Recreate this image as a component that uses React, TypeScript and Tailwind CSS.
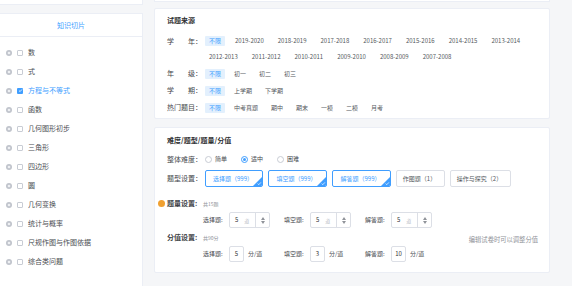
import React from "react";

const years1 = ["2019-2020", "2018-2019", "2017-2018", "2016-2017", "2015-2016", "2014-2015", "2013-2014"];
const years2 = ["2012-2013", "2011-2012", "2010-2011", "2009-2010", "2008-2009", "2007-2008"];

const topics = [
  { name: "数" },
  { name: "式" },
  { name: "方程与不等式", checked: true },
  { name: "函数" },
  { name: "几何图形初步" },
  { name: "三角形" },
  { name: "四边形" },
  { name: "圆" },
  { name: "几何变换" },
  { name: "统计与概率" },
  { name: "尺规作图与作图依据" },
  { name: "综合类问题" },
];

const Tag = ({ text, active }: { text: string; active?: boolean }) => (
  <span
    className={
      active
        ? "h-[10px] px-[4px] flex items-center rounded-[1px] bg-[#e3f0fd] text-[#409eff] text-[6px]"
        : "h-[10px] px-[4px] flex items-center text-[#555a60] text-[6px]"
    }
  >
    {text}
  </span>
);

const Label = ({ children, w = "w-[38px]" }: { children: React.ReactNode; w?: string }) => (
  <span className={`${w} shrink-0 text-[7px] text-[#45484d] whitespace-pre`}>{children}</span>
);

const OptionRow = ({ label, items, gap = "gap-[5px]" }: { label: string; items: string[]; gap?: string }) => (
  <div className="h-[17px] flex items-center">
    <Label>{label}</Label>
    <div className={`flex items-center ${gap}`}>
      <Tag text="不限" active />
      {items.map((t) => (
        <Tag key={t} text={t} />
      ))}
    </div>
  </div>
);

const Radio = ({ text, checked }: { text: string; checked?: boolean }) => (
  <div className="flex items-center gap-[3px]">
    <span
      className={
        checked
          ? "w-[7px] h-[7px] rounded-full border border-[#409eff] flex items-center justify-center bg-white"
          : "w-[7px] h-[7px] rounded-full border border-[#c8ccd4] bg-white"
      }
    >
      {checked && <span className="w-[3px] h-[3px] rounded-full bg-[#409eff]" />}
    </span>
    <span className="text-[6px] text-[#45484d]">{text}</span>
  </div>
);

const TypeButton = ({ text, w, active }: { text: string; w: string; active?: boolean }) => (
  <div
    className={
      active
        ? `relative ${w} h-[17px] rounded-[2px] border border-[#409eff] bg-white flex items-center justify-center text-[6px] text-[#409eff] overflow-hidden`
        : `relative ${w} h-[17px] rounded-[2px] border border-[#dcdfe6] bg-white flex items-center justify-center text-[6px] text-[#555a60]`
    }
  >
    <span className="pr-[2px]">{text}</span>
    {active && (
      <svg className="absolute right-0 bottom-0" width="9" height="9" viewBox="0 0 9 9">
        <path d="M9 0 L9 9 L0 9 Z" fill="#409eff" />
        <path d="M4.6 6.6 L5.8 7.7 L7.9 5.4" stroke="#fff" strokeWidth="0.7" fill="none" />
      </svg>
    )}
  </div>
);

const Stepper = ({ value }: { value: string }) => (
  <div className="w-[41px] h-[16px] flex items-center rounded-[2px] border border-[#dcdfe6] bg-white">
    <span className="pl-[5px] text-[6px] text-[#303133]">{value}</span>
    <span className="ml-[6px] text-[5px] text-[#b4b8bf]">道</span>
    <div className="ml-auto h-full w-[14px] border-l border-[#dcdfe6] flex flex-col items-center justify-center gap-[1px]">
      <svg width="4" height="3" viewBox="0 0 4 3">
        <path d="M0 3 L2 0 L4 3 Z" fill="#909399" />
      </svg>
      <svg width="4" height="3" viewBox="0 0 4 3">
        <path d="M0 0 L2 3 L4 0 Z" fill="#909399" />
      </svg>
    </div>
  </div>
);

const ScoreInput = ({ value }: { value: string }) => (
  <div className="flex items-center gap-[4px]">
    <div className="w-[15px] h-[16px] rounded-[2px] border border-[#dcdfe6] bg-white flex items-center justify-center text-[6px] text-[#303133]">
      {value}
    </div>
    <span className="text-[6px] text-[#45484d]">分/道</span>
  </div>
);

const Field = ({ label, children }: { label: string; children: React.ReactNode }) => (
  <div className="w-[81px] flex items-center gap-[6px]">
    <span className="w-[20px] text-[6px] text-[#45484d] whitespace-nowrap">{label}</span>
    {children}
  </div>
);

export default function App() {
  return (
    <div className="w-[572px] h-[286px] overflow-hidden bg-[#f5f6f8] flex font-['Noto_Sans_CJK_SC','Noto_Sans',sans-serif] leading-none">
      {/* sidebar */}
      <div className="w-[143px] shrink-0 flex flex-col">
        <div className="h-[5px] bg-white border-b border-r border-[#ebeef5]" />
        <div className="mt-[8px] flex-1 bg-white border-t border-r border-[#ebeef5]">
          <div className="h-[23px] flex items-center justify-center border-b border-[#ebeef5] text-[7px] text-[#409eff]">
            知识切片
          </div>
          <div className="pt-[6px]">
            {topics.map((t) => (
              <div key={t.name} className="h-[19px] flex items-center pl-[6px]">
                <svg width="6" height="6" viewBox="0 0 6 6">
                  <circle cx="3" cy="3" r="3" fill="#c0c4cc" />
                  <circle cx="3" cy="3" r="1.3" fill="#eef0f3" />
                </svg>
                {t.checked ? (
                  <span className="ml-[5px] w-[6px] h-[6px] rounded-[1px] bg-[#409eff] flex items-center justify-center">
                    <svg width="5" height="5" viewBox="0 0 5 5">
                      <path d="M1 2.6 L2.1 3.6 L4 1.4" stroke="#fff" strokeWidth="0.8" fill="none" />
                    </svg>
                  </span>
                ) : (
                  <span className="ml-[5px] w-[6px] h-[6px] rounded-[1px] border border-[#c8ccd4] bg-white" />
                )}
                <span className={t.checked ? "ml-[5px] text-[7px] text-[#409eff]" : "ml-[5px] text-[7px] text-[#4a4d52]"}>
                  {t.name}
                </span>
              </div>
            ))}
          </div>
        </div>
      </div>

      {/* main */}
      <div className="ml-[11px] w-[396px] shrink-0 flex flex-col">
        <div className="h-[2px] bg-white border-b border-x border-[#ebeef5]" />

        {/* source */}
        <div className="mt-[6px] h-[111px] bg-white border border-[#ebeef5] rounded-[2px] pt-[6px] pl-[12px]">
          <div className="h-[10px] flex items-center text-[7px] font-bold text-[#303133]">试题来源</div>
          <div className="mt-[8px]">
            <div className="h-[16px] flex items-center">
              <Label>{"学　　年："}</Label>
              <div className="flex items-center gap-[6px]">
                <Tag text="不限" active />
                {years1.map((y) => (
                  <Tag key={y} text={y} />
                ))}
              </div>
            </div>
            <div className="h-[16px] flex items-center pl-[38px]">
              <div className="flex items-center gap-[6px]">
                {years2.map((y) => (
                  <Tag key={y} text={y} />
                ))}
              </div>
            </div>
            <OptionRow label={"年　　级："} items={["初一", "初二", "初三"]} />
            <OptionRow label={"学　　期："} items={["上学期", "下学期"]} />
            <OptionRow label="热门题目：" items={["中考真题", "期中", "期末", "一模", "二模", "月考"]} />
          </div>
        </div>

        {/* difficulty */}
        <div className="mt-[8px] h-[146px] bg-white border border-[#ebeef5] rounded-[2px] pt-[7px] pl-[12px] pr-[11px]">
          <div className="h-[10px] flex items-center text-[7px] font-bold text-[#303133]">难度/题型/题量/分值</div>

          <div className="mt-[6px] h-[16px] flex items-center">
            <Label>整体难度：</Label>
            <div className="flex items-center gap-[14px]">
              <Radio text="简单" />
              <Radio text="适中" checked />
              <Radio text="困难" />
            </div>
          </div>

          <div className="mt-[3px] h-[17px] flex items-center">
            <Label>题型设置：</Label>
            <div className="flex items-center gap-[5px]">
              <TypeButton text="选择题（999）" w="w-[58px]" active />
              <TypeButton text="填空题（999）" w="w-[59px]" active />
              <TypeButton text="解答题（999）" w="w-[59px]" active />
              <TypeButton text="作图题（1）" w="w-[49px]" />
              <TypeButton text="操作与探究（2）" w="w-[61px]" />
            </div>
          </div>

          <div className="mt-[10px] h-[12px] flex items-center">
            <span className="-ml-[9px] mr-[2px] w-[7px] h-[7px] rounded-full bg-[#f0a030]" />
            <span className="w-[36px] text-[7px] font-bold text-[#404246]">题量设置:</span>
            <span className="text-[5px] text-[#909399]">共15题</span>
          </div>

          <div className="mt-[3px] h-[16px] flex items-center pl-[36px]">
            <Field label="选择题:">
              <Stepper value="5" />
            </Field>
            <Field label="填空题:">
              <Stepper value="5" />
            </Field>
            <Field label="解答题:">
              <Stepper value="5" />
            </Field>
          </div>

          <div className="mt-[3px] h-[12px] flex items-center">
            <span className="w-[36px] text-[7px] font-bold text-[#404246]">分值设置:</span>
            <span className="text-[5px] text-[#909399]">共90分</span>
            <span className="ml-auto self-end leading-[6px] text-[6.3px] text-[#909399]">编辑试卷时可以调整分值</span>
          </div>

          <div className="mt-[3px] h-[16px] flex items-center pl-[36px]">
            <Field label="选择题:">
              <ScoreInput value="5" />
            </Field>
            <Field label="填空题:">
              <ScoreInput value="3" />
            </Field>
            <Field label="解答题:">
              <ScoreInput value="10" />
            </Field>
          </div>
        </div>
      </div>
    </div>
  );
}
